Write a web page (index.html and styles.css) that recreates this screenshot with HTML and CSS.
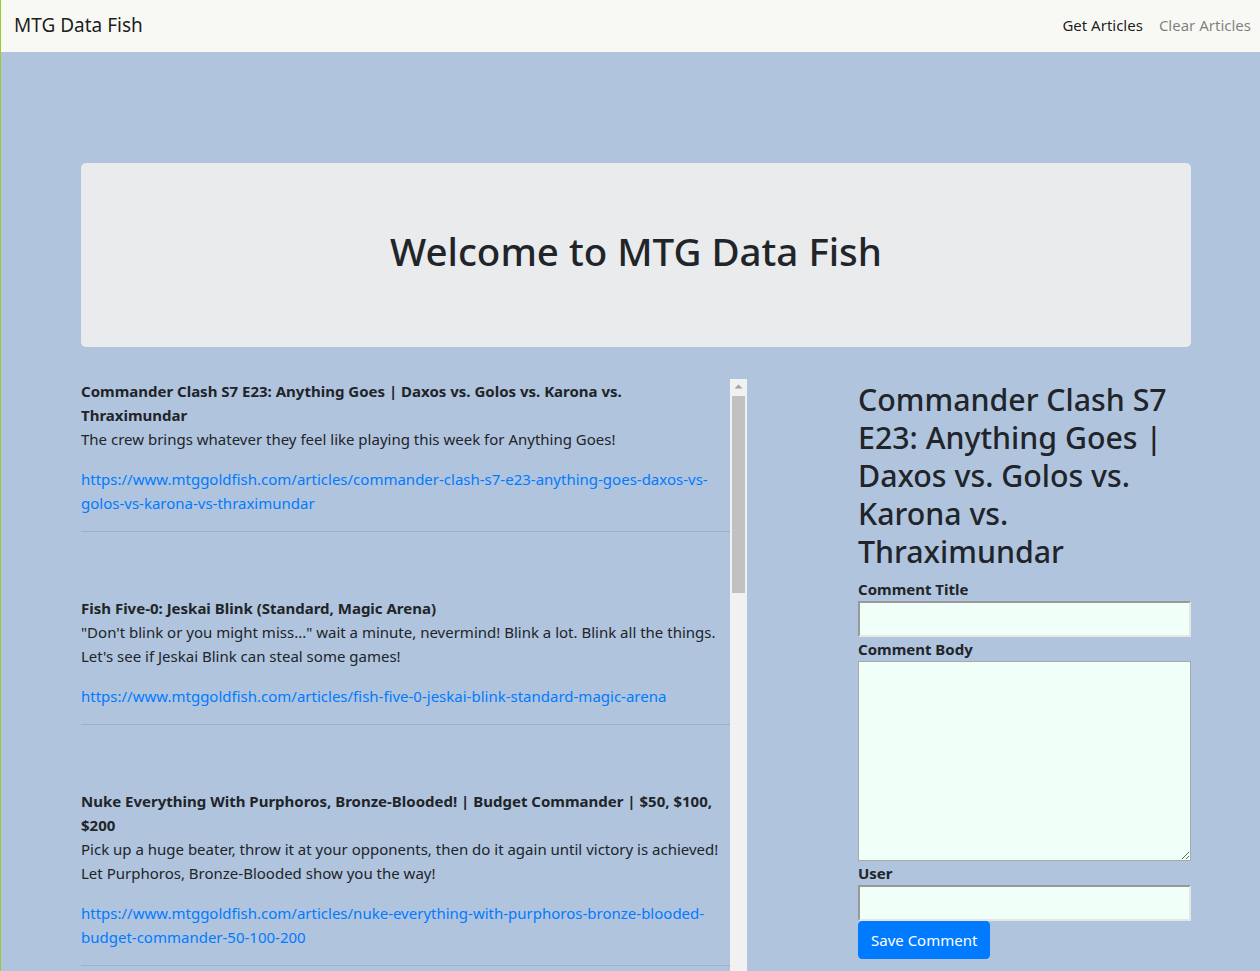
FILE: index.html
```html
<!DOCTYPE html>
<html lang="en">
<head>
<meta charset="utf-8">
<title>MTG Data Fish</title>
<link rel="stylesheet" href="styles.css">
</head>
<body>
<nav class="navbar">
  <a class="brand" href="#">MTG Data Fish</a>
  <ul class="nav">
    <li><a class="nav-link active" href="#">Get Articles</a></li>
    <li><a class="nav-link" href="#">Clear Articles</a></li>
  </ul>
</nav>
<main class="container">
  <section class="jumbotron">
    <h1>Welcome to MTG Data Fish</h1>
  </section>
  <div class="row">
    <div class="articles-box">
      <div class="articles">
        <div class="article">
          <strong class="title">Commander Clash S7 E23: Anything Goes | Daxos vs. Golos vs. Karona vs. Thraximundar</strong>
          <p class="desc">The crew brings whatever they feel like playing this week for Anything Goes!</p>
          <p class="link"><a href="#">https://www.mtggoldfish.com/articles/commander-clash-s7-e23-anything-goes-daxos-vs-golos-vs-karona-vs-thraximundar</a></p>
          <hr>
        </div>
        <div class="article">
          <strong class="title">Fish Five-0: Jeskai Blink (Standard, Magic Arena)</strong>
          <p class="desc">"Don't blink or you might miss..." wait a minute, nevermind! Blink a lot. Blink all the things. Let's see if Jeskai Blink can steal some games!</p>
          <p class="link"><a href="#">https://www.mtggoldfish.com/articles/fish-five-0-jeskai-blink-standard-magic-arena</a></p>
          <hr>
        </div>
        <div class="article">
          <strong class="title">Nuke Everything With Purphoros, Bronze-Blooded! | Budget Commander | $50, $100, $200</strong>
          <p class="desc">Pick up a huge beater, throw it at your opponents, then do it again until victory is achieved! Let Purphoros, Bronze-Blooded show you the way!</p>
          <p class="link"><a href="#">https://www.mtggoldfish.com/articles/nuke-everything-with-purphoros-bronze-blooded-budget-commander-50-100-200</a></p>
          <hr>
        </div>
      </div>
      <div class="scrollbar" aria-hidden="true">
        <div class="scroll-btn">
          <svg width="17" height="17" viewBox="0 0 17 17"><polygon points="4.5,9.5 8.5,5.5 12.5,9.5" fill="#a3a3a3"/></svg>
        </div>
        <div class="scroll-thumb"></div>
      </div>
    </div>
    <aside class="comment-panel">
      <h2>Commander Clash S7 E23: Anything Goes | Daxos vs. Golos vs. Karona vs. Thraximundar</h2>
      <form class="comment-form">
        <label for="ctitle">Comment Title</label>
        <input id="ctitle" type="text">
        <label for="cbody">Comment Body</label>
        <textarea id="cbody"></textarea>
        <label for="cuser">User</label>
        <input id="cuser" type="text">
        <button type="button" class="btn">Save Comment</button>
      </form>
    </aside>
  </div>
</main>
</body>
</html>
```
FILE: styles.css
```css
html, body {
  margin: 0;
  padding: 0;
}
body {
  background: #b0c4de;
  border-left: 1px solid #9acd32;
  min-height: 100vh;
  box-sizing: border-box;
  font-family: "Noto Sans", "Open Sans", sans-serif;
  font-size: 15px;
  line-height: 24px;
  color: #212529;
  overflow: hidden;
}
.navbar {
  height: 52px;
  background: #f8f9f4;
  display: flex;
  align-items: center;
  justify-content: space-between;
  padding-left: 13px;
  padding-right: 1px;
}
.brand {
  font-size: 19px;
  line-height: 30px;
  color: rgba(0, 0, 0, 0.9);
  text-decoration: none;
  margin-top: -2px;
}
.nav {
  list-style: none;
  margin: -3px 0 0;
  padding: 0;
  display: flex;
}
.nav-link {
  display: block;
  padding: 0 8px;
  font-size: 15px;
  color: rgba(0, 0, 0, 0.5);
  text-decoration: none;
}
.nav-link.active {
  color: rgba(0, 0, 0, 0.9);
}
.container {
  width: 1110px;
  margin-left: 80px;
  padding-top: 111px;
}
.jumbotron {
  background: #e9ebec;
  border-radius: 5px;
  padding: 64px 32px;
  margin-bottom: 32px;
  text-align: center;
}
.jumbotron h1 {
  font-size: 38.5px;
  font-weight: 500;
  line-height: 48px;
  margin: 0 0 8px;
}
.row {
  display: flex;
  justify-content: space-between;
  align-items: flex-start;
}
.articles-box {
  width: 666px;
  height: 592px;
  display: flex;
}
.articles {
  width: 649px;
  height: 100%;
  overflow: hidden;
}
.scrollbar {
  width: 17px;
  height: 100%;
  background: #f1f1f1;
  display: flex;
  flex-direction: column;
}
.scroll-btn {
  height: 17px;
  line-height: 0;
}
.scroll-thumb {
  height: 197px;
  margin: 0 2px;
  background: #c1c1c1;
}
.article .title {
  display: block;
  font-weight: 700;
}
.article .desc {
  margin: 0 0 16px;
}
.article .link {
  margin: 0 0 16px;
}
.article .link a {
  color: #007bff;
  text-decoration: none;
  word-break: break-word;
}
.article hr {
  border: 0;
  border-top: 1px solid rgba(0, 0, 0, 0.1);
  margin: 0 0 64px;
}
.comment-panel {
  width: 333px;
}
.comment-panel h2 {
  font-size: 30.3px;
  font-weight: 500;
  line-height: 38px;
  margin: 2px 0 6px;
}
.comment-form label {
  display: block;
  font-weight: 700;
}
.comment-form input,
.comment-form textarea {
  display: block;
  width: 100%;
  box-sizing: border-box;
  background: #f0fff7;
  margin: 0;
  font: inherit;
}
.comment-form input {
  height: 36px;
  border: 2px solid;
  border-color: #999999 #e6e6e6 #e6e6e6 #999999;
}
.comment-form textarea {
  height: 200px;
  border: 1px solid #a9a9a9;
}
.btn {
  display: inline-block;
  background: #007bff;
  color: #fff;
  border: 1px solid #007bff;
  border-radius: 4px;
  padding: 6px 12px;
  font: inherit;
  line-height: 24px;
}
```
